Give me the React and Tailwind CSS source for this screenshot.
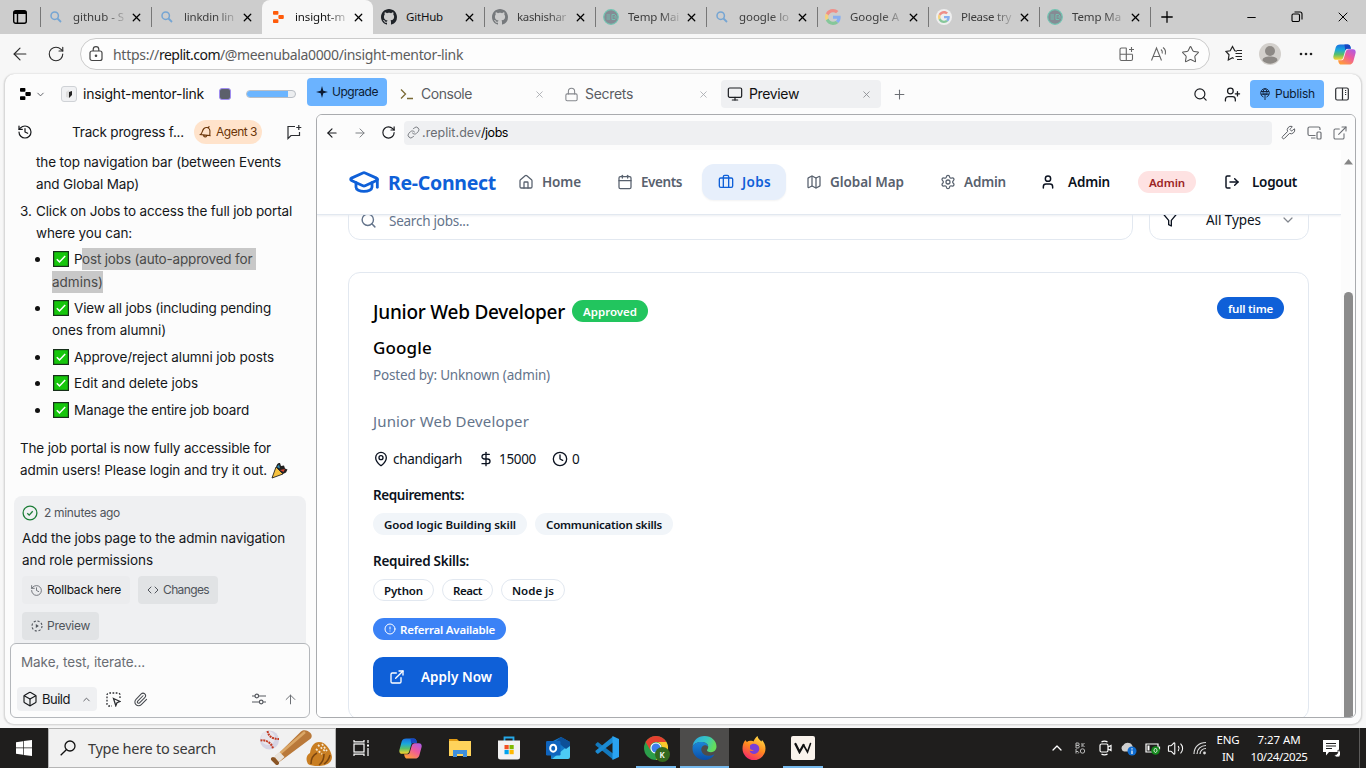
import { useLayoutEffect, useRef, useState } from 'react';
import {
  ArrowLeft, ArrowRight, ArrowUp, Box, Briefcase, Calendar, ChevronDown, ChevronUp, CircleAlert, Clock,
  Code, DollarSign, ExternalLink, GraduationCap, History, House, Link, Lock, LogOut, Map, MapPin, Monitor,
  Paperclip, Plus, RotateCw, Search, Settings, Star, User, UserPlus, Wrench, X, Minus, Volume2,
} from 'lucide-react';

/* Sets the letter spacing so that a line of text takes up w pixels. */
function Fit({ w, className = '', children }) {
  const ref = useRef(null);
  const [spacing, setSpacing] = useState(0);
  useLayoutEffect(() => {
    const natural = ref.current.getBoundingClientRect().width;
    setSpacing((w - natural) / children.length);
  }, []);
  return (
    <span ref={ref} className={`inline-block shrink-0 whitespace-pre ${className}`} style={{ letterSpacing: spacing }}>
      {children}
    </span>
  );
}

/* ---------- brand marks ---------- */
const GitHubMark = ({ className }) => (
  <svg width="16" height="16" viewBox="0 0 16 16" className={className} fill="currentColor">
    <path d="M8 0C3.58 0 0 3.58 0 8c0 3.54 2.29 6.53 5.47 7.59.4.07.55-.17.55-.38 0-.19-.01-.82-.01-1.49-2.01.37-2.53-.49-2.69-.94-.09-.23-.48-.94-.82-1.13-.28-.15-.68-.52-.01-.53.63-.01 1.08.58 1.23.82.72 1.21 1.87.87 2.33.66.07-.52.28-.87.51-1.07-1.78-.2-3.64-.89-3.64-3.95 0-.87.31-1.59.82-2.15-.08-.2-.36-1.02.08-2.12 0 0 .67-.21 2.2.82.64-.18 1.32-.27 2-.27s1.36.09 2 .27c1.53-1.04 2.2-.82 2.2-.82.44 1.1.16 1.92.08 2.12.51.56.82 1.27.82 2.15 0 3.07-1.87 3.75-3.65 3.95.29.25.54.73.54 1.48 0 1.07-.01 1.93-.01 2.2 0 .21.15.46.55.38A8.01 8.01 0 0 0 16 8c0-4.42-3.58-8-8-8z" />
  </svg>
);
const ReplitMark = ({ size, className }) => (
  <svg width={size} height={size} viewBox="0 0 12 12" className={className} fill="currentColor">
    <rect x="1" y="0" width="5.4" height="3.8" rx="0.8" />
    <rect x="6.4" y="4.1" width="5.4" height="3.8" rx="0.8" />
    <rect x="1" y="8.2" width="5.4" height="3.8" rx="0.8" />
  </svg>
);
const GoogleMark = () => (
  <svg width="16" height="16" viewBox="0 0 48 48">
    <path fill="#ef8f88" d="M24 9.500c3.500 0 6.700 1.200 9.200 3.600l6.900-6.900C35.900 2.400 30.500 0 24 0 14.600 0 6.500 5.400 2.600 13.200l8 6.200C12.400 13.700 17.700 9.500 24 9.500z" />
    <path fill="#89aff0" d="M47 24.500c0-1.600-.2-3.100-.4-4.500H24v9h12.900c-.6 3-2.300 5.500-4.800 7.200l7.700 6C44.400 38 47 31.800 47 24.500z" />
    <path fill="#f5d27c" d="M10.500 28.600c-.5-1.500-.8-3-.8-4.600s.3-3.100.8-4.600l-8-6.200C.9 16.500 0 20.100 0 24s.9 7.500 2.600 10.800l7.900-6.200z" />
    <path fill="#86c79a" d="M24 48c6.500 0 11.900-2.100 15.900-5.800l-7.700-6c-2.200 1.400-4.900 2.300-8.200 2.300-6.300 0-11.600-4.200-13.500-9.900l-8 6.200C6.500 42.600 14.600 48 24 48z" />
  </svg>
);
const GoogleRound = () => (
  <span className="flex size-4 items-center justify-center rounded-full bg-[#eeeeee]"><span className="flex scale-75"><GoogleMark /></span></span>
);
const TempMark = () => (
  <svg width="16" height="16" viewBox="0 0 16 16">
    <circle cx="8" cy="8" r="7.300" fill="#858b94" stroke="#72c4b2" strokeWidth="1.200" />
    <path d="M3.500 6h3.500M3.500 8h3.500M3.500 10h3.500M9 5.500v5M9 5.500h2.500l1.500 1.500v2.500l-1 1H9M10.500 8h2" fill="none" stroke="#72c4b2" strokeWidth="0.900" />
  </svg>
);
const CopilotMark = ({ size }) => (
  <svg width={size} height={size} viewBox="0 0 24 24">
    <defs>
      <linearGradient id="cpA" x1="0.300" y1="0" x2="0.300" y2="1">
        <stop offset="0" stopColor="#1b6fe0" /><stop offset="0.350" stopColor="#19a8dc" /><stop offset="0.650" stopColor="#5ac06a" /><stop offset="1" stopColor="#ffd42a" />
      </linearGradient>
      <linearGradient id="cpB" x1="1" y1="0" x2="0.300" y2="1">
        <stop offset="0" stopColor="#a45cf0" /><stop offset="0.500" stopColor="#ee5a9c" /><stop offset="1" stopColor="#ff9a3c" />
      </linearGradient>
    </defs>
    <path d="M7.500 1.500h8c1.400 0 2.200.9 2.600 2.200l.6 2.300h-3.200c-1.500 0-2.400.8-2.800 2.200l-2 6.800c-.5 1.700-1.600 2.600-3.200 2.600H3.200C.8 17.600-.1 15.600.5 13.200l2.300-8.400C3.400 2.700 5 1.500 7.500 1.500z" fill="url(#cpA)" />
    <path d="M12 1.500h3.500c1.400 0 2.200.9 2.600 2.200l.6 2.300h-3.200c-1.400 0-2.300.7-2.700 2z" fill="#1746c2" />
    <path d="M16.500 22.500h-8c-1.400 0-2.200-.9-2.600-2.200L5.300 18h3.200c1.500 0 2.400-.8 2.800-2.200l2-6.800c.5-1.700 1.600-2.600 3.200-2.600h4.300c2.400 0 3.300 2 2.700 4.400l-2.300 8.400c-.6 2.100-2.200 3.300-4.700 3.300z" fill="url(#cpB)" />
  </svg>
);

/* ---------- browser chrome ---------- */
const tabs = [
  { icon: 'search', text: 'github - S', w: 51 },
  { icon: 'search', text: 'linkdin lin', w: 50 },
  { icon: 'replit', text: 'insight-m', w: 50, active: true },
  { icon: 'github', text: 'GitHub', w: 37, dark: true },
  { icon: 'github', text: 'kashishar', w: 49 },
  { icon: 'temp', text: 'Temp Mai', w: 51 },
  { icon: 'search', text: 'google lo', w: 50 },
  { icon: 'google', text: 'Google A', w: 49 },
  { icon: 'ground', text: 'Please try', w: 50 },
  { icon: 'temp', text: 'Temp Ma', w: 49 },
];
function TabIcon({ kind, dark }) {
  if (kind === 'search') {
    return (
      <svg width="12" height="12" viewBox="0 0 12 12" fill="none" stroke="#75a5d3" strokeWidth="1.500"><circle cx="4.700" cy="4.700" r="3.700" /><path d="M7.500 7.500l3.500 3.500" strokeWidth="1.800" /></svg>
    );
  }
  if (kind === 'replit') return <ReplitMark size={12} className="text-[#ff5b0a]" />;
  if (kind === 'github') return <GitHubMark className={dark ? 'text-[#1f2328]' : 'text-[#76797c]'} />;
  if (kind === 'temp') return <TempMark />;
  if (kind === 'google') return <GoogleMark />;
  return <GoogleRound />;
}
function TabStrip() {
  return (
    <div className="flex h-[34px] shrink-0 items-stretch bg-[#cdcdcd] text-black">
      <div className="flex w-10 items-center justify-center">
        <svg width="14" height="14" viewBox="0 0 14 14" fill="none" stroke="#000" strokeWidth="1.400"><rect x=".7" y=".7" width="12.600" height="12.600" rx="2" /><path d="M1 2.500h12" strokeWidth="3" /><path d="M4.500 3v10" /></svg>
      </div>
      {tabs.map((t, i) => (
        <div key={i} className={`flex w-[111px] shrink-0 items-center ${t.active ? 'rounded-t-lg bg-[#f7f7f7]' : ''}`}>
          <span className={`h-5 w-px ${t.active || i === 3 ? 'bg-transparent' : 'bg-[#777777]'}`} />
          <span className="ml-[6px] flex w-[18px] justify-center"><TabIcon kind={t.icon} dark={t.dark} /></span>
          <span className={`ml-2 w-[53px] text-[11.500px] leading-4 ${t.dark ? '' : '[mask-image:linear-gradient(to_right,black_60%,transparent_105%)]'} ${t.active || t.dark ? 'text-[#111111]' : 'text-[#3c3c3c]'}`}>
            <Fit w={t.w}>{t.text}</Fit>
          </span>
          <X size={13} strokeWidth={2.4} className="ml-[4px]" />
        </div>
      ))}
      <span className="my-auto h-5 w-px bg-[#777777]" />
      <div className="flex flex-1 items-center">
        <Plus size={18} strokeWidth={1.7} className="ml-[7px]" />
        <Minus size={13} strokeWidth={1.8} className="ml-[69px]" />
        <svg width="12" height="12" viewBox="0 0 12 12" fill="none" stroke="#000" strokeWidth="1.100" className="ml-[33px]"><rect x="1" y="3" width="7.500" height="7.500" rx="1.200" /><path d="M3.500 1h5.500a2 2 0 0 1 2 2v5.500" /></svg>
        <X size={16} strokeWidth={1.5} className="ml-[32px]" />
      </div>
    </div>
  );
}
function AddressBar() {
  return (
    <div className="flex h-10 shrink-0 items-center bg-[#f7f7f7] text-[#2b2b2b]">
      <ArrowLeft size={20} strokeWidth={1.4} className="ml-[10px]" />
      <RotateCw size={18} strokeWidth={1.5} className="ml-[17px]" />
      <div className="ml-[15px] flex h-8 w-[1130px] items-center rounded-full border border-[#cbcbcb] bg-[#fdfdfd]">
        <svg width="14" height="16" viewBox="0 0 14 16" fill="none" stroke="#444" strokeWidth="1.200" className="ml-2"><rect x="1" y="5" width="12" height="9.500" rx="2" /><path d="M4.200 5V3.500a2.800 2.800 0 0 1 5.600 0V5" /><circle cx="7" cy="9.800" r=".7" fill="#444" /></svg>
        <span className="mt-px ml-[10px] flex text-[14px] leading-5 text-[#5c5c5c]">
          <Fit w={46}>https://</Fit><Fit w={61} className="text-[#161616]">replit.com</Fit><Fit w={243}>/@meenubala0000/insight-mentor-link</Fit>
        </span>
        <svg width="16" height="16" viewBox="0 0 16 16" fill="none" stroke="#666" strokeWidth="1.100" className="ml-[656px]"><path d="M7.500 2H2.500A1.500 1.500 0 0 0 1 3.500v9.500a1.500 1.500 0 0 0 1.500 1.500h9.500a1.500 1.500 0 0 0 1.500-1.500V8.500M1 8.300h12.500M7.300 2v12.500M12.500 1v5M10 3.500h5" /></svg>
        <svg width="18" height="16" viewBox="0 0 18 16" fill="none" stroke="#666" strokeWidth="1.100" className="ml-[15px]"><path d="M1.500 14.500 6.500 2l5 12.500M3.200 10.500h6.600M11 3.500c1.200 1 1.600 2.500 1.200 4M13 1.500c2.200 1.700 3 4.300 2.200 7" /></svg>
        <Star size={19} strokeWidth={1.3} className="ml-[13px] text-[#555555]" />
      </div>
      <svg width="18" height="18" viewBox="0 0 18 18" fill="none" stroke="#222" strokeWidth="1.200" className="ml-[15px]"><path d="M12 6.200 9.800 5.800 7.500 1.500 5.200 5.800 1 6.500l3 3.300-.7 5.200 4.200-2.300 1.200.7M10.500 8.500H17M10.500 11.500H17M12 14.500h5M12 5.500h5" /></svg>
      <svg width="22" height="22" viewBox="0 0 22 22" className="ml-[16px]"><circle cx="11" cy="11" r="11" fill="#d3d0cc" /><circle cx="11" cy="8" r="5" fill="#8d8985" /><path d="M3.500 17.500c0-3 3.200-4 7.500-4s7.500 1 7.500 4a10.500 10.500 0 0 1-15 0z" fill="#8d8985" /></svg>
      <svg width="14" height="4" viewBox="0 0 14 4" className="ml-[18px]" fill="#222"><circle cx="2" cy="2" r="1.300" /><circle cx="7" cy="2" r="1.300" /><circle cx="12" cy="2" r="1.300" /></svg>
      <span className="ml-[20px]"><CopilotMark size={23} /></span>
    </div>
  );
}

/* ---------- workspace header ---------- */
function WorkspaceHeader() {
  return (
    <div className="flex h-10 shrink-0 items-center text-[14px] leading-5 text-[#1b1d21]">
      <ReplitMark size={12} className="ml-[14px] text-black" />
      <ChevronDown size={11} strokeWidth={2} className="ml-[4px] text-[#55585e]" />
      <span className="ml-[15px] flex size-4 items-center justify-center rounded-[3px] border border-[#cfd2d6] bg-[#f0f1f3]">
        <svg width="8" height="8" viewBox="0 0 8 8"><path d="M1 2 4 0v8L1 7z" fill="#ddd" /><path d="M4 2l3-1v4L4 8z" fill="#222" /></svg>
      </span>
      <Fit w={121} className="ml-[6px] font-normal text-[#111111]">insight-mentor-link</Fit>
      <span className="ml-[15px] size-3 rounded-[3px] border border-[#9f8cf0] bg-[#5c606b]" />
      <span className="ml-[15px] flex h-2 w-[50px] overflow-hidden rounded-full border border-[#b9bec5] bg-[#eceef0]"><span className="w-[41px] bg-[#6bb5ff]" /></span>
      <span className="mb-1 ml-[11px] flex h-7 w-20 items-center rounded bg-[#6bb3ff] text-[12px] leading-4 text-[#0c1b33]">
        <svg width="12" height="12" viewBox="0 0 12 12" className="ml-[9px]"><path d="M6 0l1.300 4.700L12 6 7.300 7.300 6 12 4.700 7.300 0 6l4.700-1.300z" fill="#0c1b33" /></svg>
        <Fit w={46} className="ml-1">Upgrade</Fit>
      </span>
      <svg width="14" height="12" viewBox="0 0 14 12" fill="none" stroke="#7a6a35" strokeWidth="1.300" className="ml-[13px]"><path d="M1 1.500 5.500 6 1 10.500M7 10.500h6" /></svg>
      <Fit w={51} className="ml-[7px] text-[#5a5d63]">Console</Fit>
      <X size={11} strokeWidth={1.8} className="ml-[62px] text-[#a5a8ac]" />
      <Lock size={15} strokeWidth={1.7} className="ml-[19px] text-[#85888d]" />
      <Fit w={48} className="ml-[6px] text-[#5a5d63]">Secrets</Fit>
      <X size={11} strokeWidth={1.8} className="ml-[65px] text-[#a5a8ac]" />
      <span className="ml-[12px] flex h-7 w-40 items-center rounded bg-[#eff0f2]">
        <Monitor size={16} strokeWidth={1.8} className="ml-[6px]" />
        <Fit w={50} className="ml-[6px] text-[#111111]">Preview</Fit>
        <X size={11} strokeWidth={1.8} className="ml-[62px] text-[#85888d]" />
      </span>
      <Plus size={15} strokeWidth={1.7} className="ml-[11px] text-[#6d7075]" />
      <Search size={15} strokeWidth={1.9} className="ml-[286px]" />
      <UserPlus size={17} strokeWidth={1.8} className="ml-[16px]" />
      <span className="ml-[9px] flex h-7 w-[74px] items-center rounded bg-[#6bb3ff] text-[12px] leading-4 text-[#0c1b33]">
        <svg width="10" height="12" viewBox="0 0 10 12" fill="none" stroke="#0c1b33" strokeWidth="0.900" className="ml-[10px]"><path d="M3.500 9A4.300 4.300 0 1 1 6.500 9M5 4.500V12M1 3.500h8M1 6.200h8M3.300 7C2.600 4 3.300 1.500 5 .6 6.700 1.500 7.400 4 6.700 7" /></svg>
        <Fit w={40} className="ml-[5px]">Publish</Fit>
      </span>
      <svg width="14" height="14" viewBox="0 0 14 14" fill="none" stroke="#2b2d31" strokeWidth="1.200" className="ml-[11px]"><rect x=".7" y="1" width="12.600" height="12" rx="1.500" /><path d="M7.500 1v12M10 3.500h1.200M10 5.500h1.200M10 7.500h1.200" /></svg>
    </div>
  );
}

/* ---------- agent chat ---------- */
const Check = () => (
  <svg width="16" height="16" viewBox="0 0 16 16" className="mr-[5px] ml-[2px] shrink-0"><rect x=".6" y=".6" width="14.800" height="14.800" fill="#16c60c" stroke="#17301a" strokeWidth="1.200" /><path d="M3.800 8.200l2.700 2.700 5.700-6" fill="none" stroke="#fff" strokeWidth="1.500" /></svg>
);
const Bullet = () => <span className="mr-[11px] ml-[21px] size-[5px] shrink-0 rounded-full bg-[#111111]" />;
const Line = ({ className = '', children }) => <div className={`flex h-[22px] shrink-0 items-center ${className}`}>{children}</div>;

function AgentPanel() {
  return (
    <div className="flex w-[311px] shrink-0 flex-col text-[13.500px] leading-[22px] text-[#15171a]">
      <div className="flex h-9 shrink-0 items-center">
        <History size={16} strokeWidth={1.8} className="ml-[12px]" />
        <Fit w={112} className="ml-[39px]">Track progress f...</Fit>
        <span className="ml-[10px] flex h-6 w-[68px] items-center rounded-full bg-[#ffe3cb] text-[12px] leading-4 text-[#6b3508]">
          <svg width="13" height="12" viewBox="0 0 13 12" fill="none" stroke="#6b3508" strokeWidth="1.100" className="ml-[5px]"><path d="M1.500 8.500C3.500 7 3 4.500 5 2.500c2-1.800 4.500-1 5.500.7 1.200 2.300-.2 4.300.5 6.300zM4.500 9.500c.5 1.800 2.500 2 3.200.3M9 1.500l1.500-1M1.500 8.500l9.500 1" /></svg>
          <Fit w={41} className="ml-[4px]">Agent 3</Fit>
        </span>
        <svg width="16" height="16" viewBox="0 0 16 16" fill="none" stroke="#2b2d31" strokeWidth="1.200" className="ml-[24px]"><path d="M9 2.500H2V14.500l3-3h8.500V8M12.800 1v5M10.300 3.500h5" /></svg>
      </div>
      <div className="flex h-[493px] shrink-0 flex-col overflow-hidden pl-[15px]">
        <Line className="mt-px pl-4"><Fit w={245}>the top navigation bar (between Events</Fit></Line>
        <Line className="pl-4"><Fit w={103}>and Global Map)</Fit></Line>
        <Line className="mt-[5px]"><Fit w={16}>3. </Fit><Fit w={256}>Click on Jobs to access the full job portal</Fit></Line>
        <Line className="pl-4"><Fit w={96}>where you can:</Fit></Line>
        <Line className="mt-1 -ml-[6px]"><Bullet /><Check /><Fit w={8}>P</Fit><Fit w={174} className="bg-[#c8c8c8] text-[#4a4a4a]">ost jobs (auto-approved for </Fit></Line>
        <Line className="mt-px pl-8"><Fit w={51} className="bg-[#c8c8c8] text-[#4a4a4a]">admins)</Fit></Line>
        <Line className="mt-1 -ml-[6px]"><Bullet /><Check /><Fit w={197}>View all jobs (including pending</Fit></Line>
        <Line className="pl-8"><Fit w={114}>ones from alumni)</Fit></Line>
        <Line className="mt-[5px] -ml-[6px]"><Bullet /><Check /><Fit w={200}>Approve/reject alumni job posts</Fit></Line>
        <Line className="mt-1 -ml-[6px]"><Bullet /><Check /><Fit w={124}>Edit and delete jobs</Fit></Line>
        <Line className="mt-[5px] -ml-[6px]"><Bullet /><Check /><Fit w={175}>Manage the entire job board</Fit></Line>
        <Line className="mt-4"><Fit w={251}>The job portal is now fully accessible for</Fit></Line>
        <Line>
          <Fit w={247}>admin users! Please login and try it out.</Fit>
          <svg width="17" height="17" viewBox="0 0 17 17" className="ml-[4px]"><path d="M1 16 5 5l7 7z" fill="#f7c23e" stroke="#222" strokeWidth="0.900" /><path d="M5 5c1-3 2-4.500 4-4l1 3 3-.5 1 3 2.500 1-1.500 3-3 1.500z" fill="#222" /><path d="M6 5 8 2.500l1 4z" fill="#2f8fb8" /><path d="M9 8l5-1-1.500 3z" fill="#d8442f" /></svg>
        </Line>
        <div className="mt-[15px] -ml-[6px] flex h-40 w-[292px] shrink-0 flex-col rounded-t-lg bg-[#eff0f2] pl-2">
          <div className="mt-[6px] flex h-[22px] items-center text-[12px] text-[#50545b]">
            <svg width="16" height="16" viewBox="0 0 16 16" fill="none" stroke="#1c7d37" strokeWidth="1.300"><circle cx="8" cy="8" r="6.900" /><path d="M5.300 8.200l1.900 1.900 3.500-3.800" /></svg>
            <Fit w={76} className="ml-[6px]">2 minutes ago</Fit>
          </div>
          <Line className="mt-[3px]"><Fit w={263}>Add the jobs page to the admin navigation</Fit></Line>
          <Line><Fit w={131}>and role permissions</Fit></Line>
          <div className="mt-[5px] flex shrink-0 gap-2 text-[12px] leading-4">
            <span className="flex h-7 w-[108px] items-center rounded bg-[#ebecee]"><History size={13} strokeWidth={1.500} className="ml-2 text-[#5b5f66]" /><Fit w={74} className="ml-1 text-[#111111]">Rollback here</Fit></span>
            <span className="flex h-7 w-20 items-center rounded bg-[#e1e3e5] text-[#50545b]"><Code size={12} strokeWidth={2} className="ml-[9px]" /><Fit w={46} className="ml-1">Changes</Fit></span>
          </div>
          <span className="mt-2 flex h-7 w-[77px] shrink-0 items-center rounded bg-[#e1e3e5] text-[12px] leading-4 text-[#50545b]">
            <svg width="12" height="12" viewBox="0 0 12 12" fill="none" stroke="#50545b" strokeWidth="1.100" className="ml-[9px]"><circle cx="6" cy="6" r="5" strokeDasharray="2.200 1.700" /><path d="M4.800 4l3 2-3 2z" fill="#50545b" stroke="none" /></svg>
            <Fit w={43} className="ml-1">Preview</Fit>
          </span>
        </div>
      </div>
      <div className="ml-[5px] flex h-[75px] w-[300px] shrink-0 flex-col rounded-md border border-[#b4b7bb] bg-[#fcfcfc]">
        <Line className="mt-[7px] pl-[10px] text-[#6a6d73]"><Fit w={124}>Make, test, iterate...</Fit></Line>
        <div className="mt-[14px] flex items-center pl-[6px]">
          <span className="flex h-6 w-20 items-center rounded bg-[#eff0f2] text-[13px]">
            <Box size={16} strokeWidth={1.700} className="ml-[5px]" /><Fit w={28} className="ml-[4px]">Build</Fit><ChevronUp size={11} className="ml-[11px] text-[#55585e]" />
          </span>
          <svg width="15" height="15" viewBox="0 0 15 15" fill="none" stroke="#2b2d31" strokeWidth="1.300" className="ml-[9px]"><path d="M14 6V3a2 2 0 0 0-2-2H3a2 2 0 0 0-2 2v9a2 2 0 0 0 2 2h3" strokeDasharray="1.700 1.500" /><path d="M7.500 6.500l6.500 3-3 1.200-1.200 3z" /></svg>
          <Paperclip size={15} strokeWidth={1.700} className="ml-[12px] text-[#45484e]" />
          <svg width="14" height="12" viewBox="0 0 14 12" fill="none" stroke="#55585e" strokeWidth="1.200" className="ml-[104px]"><path d="M0 3h3M6.500 3H14M0 9h7.500M11 9h3" /><circle cx="4.800" cy="3" r="1.800" /><circle cx="9.200" cy="9" r="1.800" /></svg>
          <ArrowUp size={15} strokeWidth={1.600} className="ml-[17px] text-[#6d7075]" />
        </div>
      </div>
    </div>
  );
}

/* ---------- preview pane ---------- */
function PreviewBar() {
  return (
    <div className="flex h-[35px] shrink-0 items-center bg-[#fcfcfc] text-[12.500px] leading-4 text-[#1b1d21]">
      <ArrowLeft size={14} strokeWidth={2} className="ml-2" />
      <ArrowRight size={14} strokeWidth={1.700} className="ml-[14px] text-[#7c7f84]" />
      <RotateCw size={15} strokeWidth={1.900} className="ml-[14px]" />
      <span className="ml-[8px] flex h-6 w-[868px] items-center rounded bg-[#eff0f2] text-[#6a6d73]">
        <Link size={13} strokeWidth={1.600} className="ml-[3px]" />
        <Fit w={59} className="ml-[2px]">.replit.dev</Fit><Fit w={27} className="text-black">/jobs</Fit>
      </span>
      <Wrench size={15} strokeWidth={1.600} className="ml-[9px] text-[#5a5d63]" />
      <svg width="15" height="14" viewBox="0 0 15 14" fill="none" stroke="#6d7075" strokeWidth="1.200" className="ml-[11px]"><path d="M8.500 9.500h-6A1.500 1.500 0 0 1 1 8V2.500A1.500 1.500 0 0 1 2.500 1h9A1.500 1.500 0 0 1 13 2.500V4M4 12h4.500" /><rect x="10" y="6" width="4" height="7" rx="1" /></svg>
      <ExternalLink size={16} strokeWidth={1.600} className="ml-[10px] text-[#6d7075]" />
    </div>
  );
}

function SiteNav() {
  return (
    <div className="flex h-[65px] shrink-0 items-center border-b border-[#e2e8f0] text-[13.500px] leading-5 font-semibold text-[#58616e] shadow-[0_1px_2px_rgba(15,40,90,0.08)]">
      <GraduationCap size={32} strokeWidth={2.100} className="ml-[31px] text-[#0f60d8]" />
      <Fit w={108} className="mt-[2px] ml-[8px] text-[19.500px] leading-7 font-bold text-[#0f60d8]">Re-Connect</Fit>
      <House size={16} strokeWidth={1.900} className="ml-[22px]" />
      <Fit w={39} className="ml-[8px]">Home</Fit>
      <Calendar size={16} strokeWidth={1.900} className="ml-[36px]" />
      <Fit w={41} className="ml-[8px]">Events</Fit>
      <span className="ml-[20px] flex h-9 w-[84px] items-center rounded-xl bg-[#e7effb] text-[#0f60d8] shadow-xs"><Briefcase size={16} strokeWidth={2} className="ml-4" /><Fit w={29} className="ml-[8px]">Jobs</Fit></span>
      <Map size={16} strokeWidth={1.900} className="ml-[20px]" />
      <Fit w={74} className="ml-[8px]">Global Map</Fit>
      <Settings size={16} strokeWidth={1.900} className="ml-[36px]" />
      <Fit w={42} className="ml-[8px]">Admin</Fit>
      <User size={16} strokeWidth={2.200} className="ml-[34px] text-[#0b1220]" />
      <Fit w={42} className="ml-[12px] text-[#0b1220]">Admin</Fit>
      <span className="ml-[28px] flex h-[22px] w-[58px] items-center justify-center rounded-full bg-[#fee2e2] pt-px text-[11.500px] leading-4 text-[#9b2424]"><Fit w={36}>Admin</Fit></span>
      <LogOut size={16} strokeWidth={2.200} className="ml-[28px] text-[#0b1220]" />
      <Fit w={45} className="ml-[12px] text-[#0b1220]">Logout</Fit>
    </div>
  );
}

const Chip = ({ w, className, children }) => (
  <span className={`flex h-[22px] items-center rounded-full px-[11px] pt-px text-[11.500px] leading-4 font-semibold ${className}`}><Fit w={w}>{children}</Fit></span>
);

function JobsPage() {
  return (
    <div className="flex w-[1024px] shrink-0 flex-col overflow-hidden bg-white text-[#0b1220]">
      <SiteNav />
      <div className="ml-[31px] flex h-[25px] shrink-0 items-end gap-4 overflow-hidden text-[13.500px] leading-5">
        <div className="flex h-10 w-[785px] items-center rounded-xl border border-[#e2e8f0] text-[#64748b]">
          <Search size={17} strokeWidth={2} className="ml-[11px]" />
          <Fit w={80} className="mt-[2px] ml-[12px]">Search jobs...</Fit>
        </div>
        <div className="flex h-10 w-40 items-center rounded-xl border border-[#e2e8f0]">
          <svg width="16" height="16" viewBox="0 0 24 24" fill="none" stroke="currentColor" strokeWidth="2" strokeLinejoin="round" className="ml-3"><polygon points="22 3 2 3 10 12.460 10 19 14 21 14 12.460 22 3" /></svg>
          <Fit w={55} className="ml-[28px]">All Types</Fit>
          <ChevronDown size={16} strokeWidth={1.800} className="ml-[19px] text-[#81858d]" />
        </div>
      </div>
      <div className="mt-8 ml-[31px] flex h-[448px] w-[961px] shrink-0 flex-col items-start rounded-xl border border-[#e2e8f0] pl-6">
        <div className="mt-6 flex w-[911px] items-start">
          <Fit w={192} className="mt-px text-[19px] leading-[28px] font-medium text-black">Junior Web Developer</Fit>
          <Chip w={54} className="mt-[3px] ml-[7px] bg-[#22c55e] text-white">Approved</Chip>
          <Chip w={45} className="ml-auto bg-[#0f60d8] text-white">full time</Chip>
        </div>
        <Fit w={59} className="mt-[9px] text-[17px] leading-[26px] font-medium text-black">Google</Fit>
        <Fit w={177} className="mt-[4px] text-[13.500px] leading-5 text-[#64748b]">Posted by: Unknown (admin)</Fit>
        <Fit w={156} className="mt-[24px] text-[15px] leading-6 text-[#64748b]">Junior Web Developer</Fit>
        <div className="mt-[16px] flex h-5 items-center text-[13.500px] leading-5">
          <MapPin size={16} /><Fit w={69} className="ml-1">chandigarh</Fit>
          <DollarSign size={16} className="ml-[16px]" /><Fit w={37} className="ml-[5px]">15000</Fit>
          <Clock size={16} className="ml-[16px]" /><Fit w={8} className="ml-1">0</Fit>
        </div>
        <Fit w={91} className="mt-[16px] text-[13.500px] leading-5 font-semibold">Requirements:</Fit>
        <div className="mt-2 flex gap-2">
          <Chip w={132} className="bg-[#f1f5f9]">Good logic Building skill</Chip>
          <Chip w={116} className="bg-[#f1f5f9]">Communication skills</Chip>
        </div>
        <Fit w={96} className="mt-4 text-[13.500px] leading-5 font-semibold">Required Skills:</Fit>
        <div className="mt-2 flex gap-2">
          <Chip w={39} className="border border-[#e2e8f0] !px-[10px]">Python</Chip>
          <Chip w={29} className="border border-[#e2e8f0] !px-[10px]">React</Chip>
          <Chip w={42} className="border border-[#e2e8f0] !px-[10px]">Node js</Chip>
        </div>
        <span className="mt-[17px] flex h-[22px] w-[133px] items-center rounded-full bg-[#3b82f6] text-[11.500px] leading-4 font-semibold text-white"><CircleAlert size={12} className="ml-[11px]" /><Fit w={95} className="mt-px ml-1">Referral Available</Fit></span>
        <span className="mt-[17px] flex h-10 w-[135px] items-center rounded-[10px] bg-[#0f60d8] text-[13.500px] leading-5 font-semibold text-white"><ExternalLink size={16} className="ml-4" /><Fit w={71} className="ml-4">Apply Now</Fit></span>
      </div>
    </div>
  );
}

function PreviewPane() {
  return (
    <div className="flex h-[604px] w-[1040px] shrink-0 flex-col overflow-hidden rounded-md border border-[#a9abae]">
      <PreviewBar />
      <div className="flex min-h-0 flex-1 font-['Noto_Sans',sans-serif]">
        <JobsPage />
        <div className="flex flex-1 flex-col items-center bg-[#fcfcfc] pl-px">
          <svg width="9" height="6" viewBox="0 0 9 6" className="mt-[9px]"><path d="M0 5.500 4.500 0 9 5.500z" fill="#858585" /></svg>
          <div className="mt-[127px] w-[9px] flex-1 rounded-t-full bg-[#8b8b8b]" />
        </div>
      </div>
    </div>
  );
}

/* ---------- taskbar ---------- */
const Explorer = () => (
  <svg width="24" height="22" viewBox="0 0 24 22"><path d="M1 2h8l2 2h11v6H1z" fill="#e29b14" /><rect x="1" y="4" width="22" height="15" fill="#ffd35b" /><path d="M5 20v-7h14v7h-4v-3H9v3z" fill="#3f8fdc" /></svg>
);
const Store = () => (
  <svg width="24" height="24" viewBox="0 0 24 24"><path d="M7.500 5V1.500h9V5" fill="none" stroke="#25a8e8" strokeWidth="1.800" /><path d="M1 4.500h22V21a2.500 2.500 0 0 1-2.500 2.500h-17A2.500 2.500 0 0 1 1 21z" fill="#f2f2f2" /><rect x="7.500" y="9" width="4.200" height="4.200" fill="#f25022" /><rect x="12.500" y="9" width="4.200" height="4.200" fill="#7fba00" /><rect x="7.500" y="14" width="4.200" height="4.200" fill="#00a4ef" /><rect x="12.500" y="14" width="4.200" height="4.200" fill="#ffb900" /></svg>
);
const Outlook = () => (
  <svg width="24" height="24" viewBox="0 0 24 24"><path d="M5 6 15 1l9 5v13l-3 4H5z" fill="#1378c8" /><path d="M24 8v13a2 2 0 0 1-2 2H6l18-15z" fill="#4ccbf5" /><path d="M10 5l10 8 4-3V6l-9-5z" fill="#0c4f98" /><rect x="0" y="5" width="14.500" height="14.500" rx="1.200" fill="#0f64bd" /><ellipse cx="7.200" cy="12.200" rx="3" ry="3.500" fill="none" stroke="#fff" strokeWidth="2" /></svg>
);
const VSCode = () => (
  <svg width="24" height="24" viewBox="0 0 24 24"><path d="M.5 8 2.800 6 18 17.500v6L.5 9.300z" fill="#1379bd" /><path d="M.5 16 2.800 18 18 6.500v-6L.5 14.700z" fill="#1b8bd3" /><path d="M17.500 0 24 3v18l-6.500 3z" fill="#2aa3f0" /></svg>
);
const Chrome = () => (
  <span className="relative flex">
    <svg width="24" height="24" viewBox="0 0 24 24"><circle cx="12" cy="12" r="12" fill="#2c9e4b" /><path d="M1.600 6A12 12 0 0 1 22.400 6H12a6 6 0 0 0-5.200 9z" fill="#e5402f" /><path d="M22.400 6A12 12 0 0 1 12 24l5.200-9A6 6 0 0 0 12 6z" fill="#fcc72b" /><circle cx="12" cy="12" r="5.600" fill="#fff" /><circle cx="12" cy="12" r="4.500" fill="#3f7fec" /></svg>
    <span className="absolute -right-[2px] -bottom-[2px] flex size-[15px] items-center justify-center rounded-full bg-[#34691e] text-[8px] leading-none font-semibold text-white">K</span>
  </span>
);
const Edge = () => (
  <svg width="25" height="24" viewBox="0 0 25 24">
    <defs><linearGradient id="eg1" x1="0" y1="0" x2="1" y2="0.300"><stop offset="0" stopColor="#2aa7e4" /><stop offset="0.600" stopColor="#36c6c2" /><stop offset="1" stopColor="#64dc5c" /></linearGradient><linearGradient id="eg2" x1="0" y1="0" x2="0" y2="1"><stop offset="0" stopColor="#1a86d8" /><stop offset="1" stopColor="#0c4ea8" /></linearGradient></defs>
    <path d="M.5 11C1 4.500 6 0 12.500 0 19.500 0 24.500 5 24.500 10.500c0 3.500-2.500 5.700-5.500 5.700-2.700 0-4-.9-4-1.900 0-.8 1.200-1.200 1.200-3.500 0-2.500-2.700-4.700-6.200-4.700C5 6.100 1.500 8 .5 11z" fill="url(#eg1)" />
    <path d="M.5 12.500C.5 8.500 4.500 6.100 9 6.100c4 0 7 2 7.200 4.700-1-1.300-2.400-1.800-3.700-1.500-2.300.4-3.700 3-3 5.700 1.200 4.500 7 6.500 13 3.200C20.500 22 16.500 24 12.500 24 5.500 24 .5 18.700.5 12.500z" fill="url(#eg2)" />
  </svg>
);
const Firefox = () => (
  <svg width="24" height="24" viewBox="0 0 24 24">
    <defs><linearGradient id="ff1" x1="0.800" y1="0" x2="0.300" y2="1"><stop offset="0" stopColor="#ffe14a" /><stop offset="0.500" stopColor="#ff8a1e" /><stop offset="1" stopColor="#f5266b" /></linearGradient></defs>
    <path d="M3.500 4c.5 1 .8 1.500 1.500 2 1-1 2.500-1.400 3.800-1.200C10 4.500 11 5 11.500 5.500 12.500 3 14 1 15.500 0c.5 3 2.500 4 4 5.500l.5-1.500c2 2 3.500 5 3.500 8.500A11.500 11.500 0 0 1 12 24 11.500 11.500 0 0 1 .5 12.500C.5 9 1.500 6 3.500 4z" fill="url(#ff1)" />
    <path d="M8 9.500c1.500-2 5-2.500 7.500-.5s2.500 6-.5 8-7 .5-7.500-2.500c2 1 3.500.5 4.500-.5-2 0-3.500-.5-4-1.500z" fill="#7a3fd6" />
  </svg>
);
const Baseball = () => (
  <svg width="74" height="38" viewBox="0 0 74 38">
    <circle cx="10.500" cy="11" r="9.500" fill="#d6d4e4" /><circle cx="9" cy="9" r="7" fill="#e8e6ec" /><path d="M1.500 11.500c5-1 11 2 12.500 8M8.500 2c1 5 4 8 11.500 8" fill="none" stroke="#c33a22" strokeWidth="2" strokeDasharray="2 0.800" />
    <path d="M14 30 42 2.500c3-2.500 7-1 9.500 1.500 2 2.500 1.500 5-1 6.500L19 34z" fill="#b9793a" /><path d="M17 28 46 3" stroke="#dba766" strokeWidth="2.500" /><path d="M15.500 27.500l5-4.500 5 5-6 5.500z" fill="#e8e3dc" /><path d="M14 30l4 4" stroke="#8a5525" strokeWidth="4" strokeLinecap="round" />
    <path d="M49 35c-3-6-1-9 2-11 1-7 4-11 9-11 7 0 12 8 13 15 0 7-8 9-14 9-4 0-8-.5-10-2z" fill="#c97e22" /><path d="M58 24c-4 2-6 6-6 11M65 25c0 4-1 8-5 11M71 26c-1 4-3 7-6 9" fill="none" stroke="#7c4610" strokeWidth="1.500" /><path d="M59 16l8 7M63 15l5 7M57 20l6 5" stroke="#f5ead8" strokeWidth="1.700" strokeDasharray="2 1.500" />
  </svg>
);
const TaskView = () => (
  <svg width="17" height="16" viewBox="0 0 17 16" fill="none" stroke="#fff" strokeWidth="1.200"><rect x="1" y="4" width="10" height="8" /><path d="M1 0v1.800h10V0M1 16v-1.800h10V16M15 0v3M15 8v8" /><rect x="14" y="4.500" width="2" height="2" fill="#fff" stroke="none" /></svg>
);
const WMark = () => (
  <span className="flex size-6 items-center justify-center rounded-[2px] bg-[#faf3ec]">
    <svg width="18" height="12" viewBox="0 0 18 12" fill="none" stroke="#111" strokeWidth="2.300" strokeLinecap="round"><path d="M1.500 2 5.500 10l4-7" /><path d="M9.500 3l4 7L16.500 1.500" strokeWidth="1.600" /></svg>
  </span>
);
const apps = [
  { el: <TaskView /> }, { el: <CopilotMark size={23} /> }, { el: <Explorer /> }, { el: <Store /> }, { el: <Outlook /> },
  { el: <VSCode /> }, { el: <Chrome />, open: true }, { el: <Edge />, open: true, focus: true }, { el: <Firefox /> }, { el: <WMark />, open: true },
];

function Taskbar() {
  return (
    <div className="flex h-10 shrink-0 items-center bg-[#1f1e1d] text-white">
      <svg width="16" height="16" viewBox="0 0 16 16" fill="#fff" className="ml-4"><path d="M0 2.200 7 1.200v6.400H0zM7.700 1.100 16 0v7.600H7.700zM0 8.300h7v6.500l-7-1zM7.700 8.300H16V16l-8.300-1.100z" /></svg>
      <div className="mr-px ml-4 flex h-10 w-72 items-center border border-[#b5b5b5] bg-[#f1f1f1] text-[14.500px] leading-5 text-[#3a3a3a]">
        <svg width="16" height="16" viewBox="0 0 16 16" fill="none" stroke="#111" strokeWidth="1.300" className="ml-[11px]"><circle cx="10" cy="6" r="5" /><path d="M6.300 9.700.7 15.300" /></svg>
        <Fit w={128} className="ml-[12px]">Type here to search</Fit>
        <span className="ml-[43px]"><Baseball /></span>
      </div>
      {apps.map((a, i) => (
        <div key={i} className={`flex h-10 w-[49px] shrink-0 flex-col items-center ${a.focus ? 'bg-[#4d4c4b]' : ''}`}>
          <span className="flex h-[38px] items-center pt-[2px]">{a.el}</span>
          <span className={`h-[2px] ${a.open ? 'bg-[#76b9ed]' : ''} ${a.focus ? 'w-full' : 'w-10'}`} />
        </div>
      ))}
      <ChevronUp size={16} strokeWidth={1.900} className="ml-[222px]" />
      <svg width="11" height="12" viewBox="0 0 11 12" fill="none" stroke="#bbb" strokeWidth="1" className="ml-[10px]"><path d="M1 1v5h2a1.300 1.300 0 0 0 0-2.600H1 3A1.200 1.200 0 0 0 3 1zM1 7v4.500M1 9.500h2a1.200 1.200 0 0 1 0 2M7 1v4M9.500 1 7.500 3l2 2" /><circle cx="7.500" cy="9" r="2.200" /></svg>
      <svg width="13" height="16" viewBox="0 0 13 16" fill="none" stroke="#fff" strokeWidth="1.200" className="ml-[13px]"><rect x="1" y="4" width="8" height="8" rx="1.500" /><path d="M9 7l3-1.500v5L9 9M2.500 2C4 .8 7 .8 8.500 2M2.500 14c1.500 1.200 4.500 1.200 6 0" /></svg>
      <svg width="17" height="15" viewBox="0 0 17 15" className="ml-[8px]"><path d="M4 10.500A3.500 3.500 0 0 1 3.500 4 5 5 0 0 1 12 4l3 6.500z" fill="#cfcfcf" /><circle cx="12" cy="10" r="4.500" fill="#0f6cd0" /><path d="M12 9.500V13M12 7.300v1.200" stroke="#fff" strokeWidth="1.200" /></svg>
      <svg width="16" height="13" viewBox="0 0 16 13" fill="none" className="ml-[8px]"><path d="M1 2h12v8H1zM14.500 4.500v3" stroke="#fff" strokeWidth="1.200" /><rect x="2.500" y="3.500" width="2" height="5" fill="#fff" /><circle cx="10.500" cy="8.500" r="4.300" fill="#14891c" /><path d="M10.500 6c2 2 2 3.500 0 4.500-2-1-2-2.500 0-4.500z" stroke="#fff" strokeWidth=".9" /></svg>
      <Volume2 size={17} strokeWidth={1.500} className="ml-[6px]" />
      <svg width="14" height="14" viewBox="0 0 14 14" fill="none" stroke="#ddd" strokeWidth="1.200" className="ml-[9px]"><path d="M1 13C1 6 6 1.500 13 1.500M4 13c0-5 4-8.500 9-8.500M7 13c0-3 2.500-5.500 6-5.500" /><circle cx="11.500" cy="12" r="1.400" fill="#ddd" stroke="none" /></svg>
      <div className="ml-[9px] flex w-6 flex-col items-center text-[11.500px] leading-[17px]"><Fit w={23}>ENG</Fit><Fit w={12}>IN</Fit></div>
      <div className="ml-[10px] flex w-[58px] flex-col items-center text-[11.500px] leading-[17px]"><Fit w={43}>7:27 AM</Fit><Fit w={57}>10/24/2025</Fit></div>
      <svg width="17" height="17" viewBox="0 0 17 17" className="ml-[15px]"><path d="M0 0h16v12H6l-3 3.500V12H0z" fill="#fff" /><path d="M3 3.500h10M3 6h10M3 8.500h6" stroke="#222" strokeWidth="1.100" /><path d="M15 10a3.600 3.600 0 1 1-4 5c2.500.5 4.300-2 4-5z" fill="#fff" stroke="#222" strokeWidth=".8" /></svg>
      <span className="ml-[19px] h-10 w-px bg-[#5c5b5a]" />
    </div>
  );
}

export default function App() {
  return (
    <div className="flex h-[768px] w-[1366px] flex-col overflow-hidden bg-[#f7f7f7] font-['Noto_Sans',sans-serif]">
      <TabStrip />
      <AddressBar />
      <div className="h-[654px] shrink-0 px-1">
        <div className="flex h-[651px] flex-col rounded-[10px] border border-t-0 border-[#d9d9d9] bg-[#fcfcfc] font-[Inter,sans-serif] shadow-[0_0_2px_rgba(0,0,0,0.2)]">
          <WorkspaceHeader />
          <div className="flex">
            <AgentPanel />
            <PreviewPane />
          </div>
        </div>
      </div>
      <Taskbar />
    </div>
  );
}
